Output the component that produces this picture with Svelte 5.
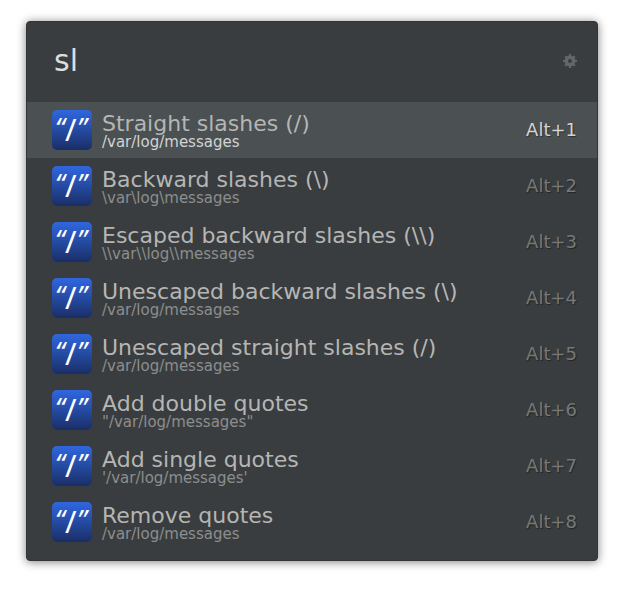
<script>
  let query = $state('sl');
  let selected = $state(0);

  const results = [
    { title: 'Straight slashes (/)', detail: '/var/log/messages' },
    { title: 'Backward slashes (\\)', detail: '\\var\\log\\messages' },
    { title: 'Escaped backward slashes (\\\\)', detail: '\\\\var\\\\log\\\\messages' },
    { title: 'Unescaped backward slashes (\\)', detail: '/var/log/messages' },
    { title: 'Unescaped straight slashes (/)', detail: '/var/log/messages' },
    { title: 'Add double quotes', detail: '"/var/log/messages"' },
    { title: 'Add single quotes', detail: "'/var/log/messages'" },
    { title: 'Remove quotes', detail: '/var/log/messages' }
  ];
</script>

<main class="launcher">
  <header class="search">
    <input type="text" aria-label="Search" spellcheck="false" autocomplete="off" bind:value={query} />
    <button class="settings" type="button" aria-label="Preferences">
      <svg width="14" height="14" viewBox="0 0 14 14" aria-hidden="true">
        <g stroke="#646767" stroke-width="2.2">
          <path d="M7 0v3M7 11v3M0 7h3M11 7h3M2.2 2.2l2 2M9.8 9.8l2 2M11.8 2.2l-2 2M4.2 9.8l-2 2" />
        </g>
        <circle cx="7" cy="7" r="3.7" fill="none" stroke="#646767" stroke-width="3.4" />
      </svg>
    </button>
  </header>

  <ul class="results">
    {#each results as result, i}
      <li>
        <button type="button" class="row" class:selected={i === selected} onclick={() => (selected = i)}>
          <svg class="icon" viewBox="0 0 40 40" aria-hidden="true">
            <text class="quote" x="3" y="28">“</text>
            <text class="slash" x="13" y="31">/</text>
            <text class="quote" x="25" y="28">”</text>
          </svg>
          <span class="text">
            <span class="title">{result.title}</span>
            <span class="detail">{result.detail}</span>
          </span>
          <span class="shortcut">Alt+{i + 1}</span>
        </button>
      </li>
    {/each}
  </ul>
</main>

<style>
  :global(body) {
    background: #fff;
  }

  .launcher {
    margin: 21px 26px 33px;
    padding-bottom: 10px;
    box-sizing: border-box;
    border: 1px solid #323435;
    border-radius: 4px;
    background: #3a3d3f;
    box-shadow: 0 1px 10px rgba(0, 0, 0, 0.5);
    font-family: 'DejaVu Sans', sans-serif;
  }

  .search {
    display: flex;
    align-items: center;
    height: 80px;
    padding: 0 20px 3px 27px;
    box-sizing: border-box;
  }

  .search input {
    flex: 1;
    min-width: 0;
    padding: 0;
    border: 0;
    outline: 0;
    background: none;
    color: #dcdddd;
    font: 30px/40px 'DejaVu Sans', sans-serif;
  }

  .settings {
    display: flex;
    padding: 0;
    border: 0;
    background: none;
  }

  .results {
    margin: 0;
    padding: 0;
    list-style: none;
  }

  .row {
    display: flex;
    align-items: center;
    width: 100%;
    height: 56px;
    padding: 0 20px 0 25px;
    border: 0;
    background: none;
    color: #8c8e8e;
    font-family: inherit;
    text-align: left;
  }

  .icon {
    flex: none;
    width: 40px;
    height: 40px;
    margin-right: 10px;
    overflow: visible;
    border-radius: 5px;
    background: linear-gradient(#3067e0, #1a2e66);
    fill: #fff;
    font-family: 'Noto Sans', sans-serif;
  }

  .quote {
    font-size: 27px;
    font-style: italic;
  }

  .slash {
    font-size: 31px;
  }

  .text {
    display: flex;
    flex: 1;
    flex-direction: column;
    min-width: 0;
    padding-top: 3px;
    white-space: nowrap;
  }

  .title {
    color: #b5b6b4;
    font-size: 22px;
    line-height: 22px;
  }

  .detail {
    font-size: 15px;
    line-height: 15px;
  }

  .shortcut {
    color: #767878;
    font-size: 18px;
    line-height: 24px;
    text-shadow: 1px 1px 1px rgba(0, 0, 0, 0.4);
  }

  .selected {
    background: #4b5052;
  }

  .selected .detail,
  .selected .shortcut {
    color: #d2d3d2;
  }
</style>
